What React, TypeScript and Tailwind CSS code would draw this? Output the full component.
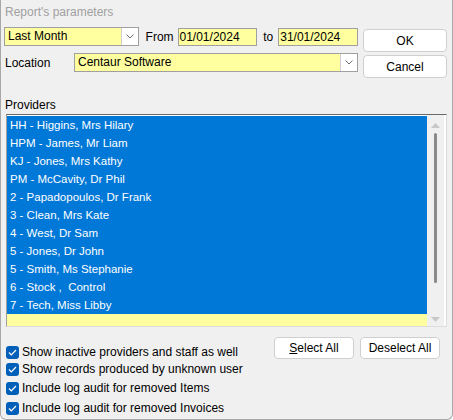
import React from 'react';

const providers = [
  'HH - Higgins, Mrs Hilary',
  'HPM - James, Mr Liam',
  'KJ - Jones, Mrs Kathy',
  'PM - McCavity, Dr Phil',
  '2 - Papadopoulos, Dr Frank',
  '3 - Clean, Mrs Kate',
  '4 - West, Dr Sam',
  '5 - Jones, Dr John',
  '5 - Smith, Ms Stephanie',
  '6 - Stock ,  Control',
  '7 - Tech, Miss Libby',
];

const options = [
  { label: 'Show inactive providers and staff as well', mt: 'mt-[18px]' },
  { label: 'Show records produced by unknown user', mt: 'mt-[3px]' },
  { label: 'Include log audit for removed Items', mt: 'mt-[5px]' },
  { label: 'Include log audit for removed Invoices', mt: 'mt-[6px]' },
];

function Chevron() {
  return (
    <svg width="8" height="5" viewBox="0 0 8 5" fill="none">
      <path d="M0.5 0.5 L4 4 L7.5 0.5" stroke="#707070" strokeWidth="1" />
    </svg>
  );
}

function Combo({ value, className }: { value: string; className: string }) {
  return (
    <div className={`flex h-[19px] border border-[#a0a0a0] bg-[#ffffa0] ${className}`}>
      <span className="flex-1 pl-[3px] leading-[17px] text-black">{value}</span>
      <span className="flex w-[17px] items-center justify-center border-l border-[#d0d0d0] bg-white">
        <Chevron />
      </span>
    </div>
  );
}

function DateBox({ value }: { value: string }) {
  return (
    <div className="h-[18px] w-[80px] border border-[#a0a0a0] bg-[#ffffa0] pl-[1px] leading-[16px] text-black">
      {value}
    </div>
  );
}

function Button({ children, className }: { children: React.ReactNode; className: string }) {
  return (
    <button className={`flex items-center justify-center rounded-[4px] border border-[#cfcfcf] bg-white text-black ${className}`}>
      {children}
    </button>
  );
}

function Check() {
  return (
    <span className="flex h-[13px] w-[13px] items-center justify-center rounded-[3px] bg-[#005fb8]">
      <svg width="9" height="7" viewBox="0 0 9 7" fill="none">
        <path d="M1 3.5 L3.3 5.8 L8 1" stroke="white" strokeWidth="1.2" />
      </svg>
    </span>
  );
}

export default function App() {
  return (
    <div
      className="h-[420px] w-[453px] overflow-hidden rounded-b-[6px] border-x border-b border-[#a8a8a8] bg-[#f0f0f0] text-[12px]"
      style={{ fontFamily: '"Liberation Sans", Arial, sans-serif' }}
    >
      {/* Title */}
      <div className="h-[27px] pl-[4px] pt-[5px] leading-[14px] text-[#a0a0a0]">Report's parameters</div>

      {/* Top controls */}
      <div className="flex">
        <div className="flex w-[357px] flex-col">
          <div className="flex h-[19px] items-center">
            <Combo value="Last Month" className="ml-[3px] w-[135px]" />
            <span className="ml-[7px] w-[32px] text-black">From</span>
            <DateBox value="01/01/2024" />
            <span className="ml-[6px] w-[15px] text-black">to</span>
            <DateBox value="31/01/2024" />
          </div>
          <div className="mt-[7px] flex h-[19px] items-center">
            <span className="ml-[4px] w-[69px] text-black">Location</span>
            <Combo value="Centaur Software" className="w-[284px]" />
          </div>
        </div>
        <div className="ml-[5px] flex flex-col pt-[2px]">
          <Button className="h-[23px] w-[84px]">OK</Button>
          <Button className="mt-[3px] h-[23px] w-[84px]">Cancel</Button>
        </div>
      </div>

      {/* Providers */}
      <div className="mt-[20px] pl-[4px] leading-[14px] text-black">Providers</div>
      <div className="ml-[5px] mt-[2px] flex h-[213px] w-[441px] border border-[#a0a0a0] border-t-[#696969] border-r-[#dcdcdc] border-b-[#dcdcdc] bg-white">
        <div className="flex w-[420px] flex-col pt-[1px]">
          {providers.map((p) => (
            <div key={p} className="h-[18px] whitespace-pre bg-[#0078d7] pl-[3px] text-[11.5px] leading-[18px] text-white">
              {p}
            </div>
          ))}
          <div className="h-[12px] bg-[#ffffa0]" />
        </div>
        <div className="flex w-[17px] flex-col items-center bg-[#f0f0f0] pb-[4px] pt-[8px]">
          <svg width="9" height="5" viewBox="0 0 9 5"><path d="M0 5 L4.5 0 L9 5 Z" fill="#c8c8c8" /></svg>
          <div className="mt-[5px] h-[150px] w-[3px] rounded-full bg-[#8a8a8a]" />
          <div className="flex-1" />
          <svg width="9" height="5" viewBox="0 0 9 5"><path d="M0 0 L4.5 5 L9 0 Z" fill="#c8c8c8" /></svg>
        </div>
      </div>

      {/* Options */}
      <div className="flex">
        <div className="flex w-[273px] flex-col pl-[5px]">
          {options.map((o) => (
            <label key={o.label} className={`flex items-center gap-[3px] leading-[14px] text-black ${o.mt}`}>
              <Check />
              <span>{o.label}</span>
            </label>
          ))}
        </div>
        <div className="mt-[10px] flex h-[22px] gap-[6px]">
          <Button className="h-[22px] w-[80px]">
            <span><span className="underline">S</span>elect All</span>
          </Button>
          <Button className="h-[22px] w-[80px]">Deselect All</Button>
        </div>
      </div>
    </div>
  );
}
